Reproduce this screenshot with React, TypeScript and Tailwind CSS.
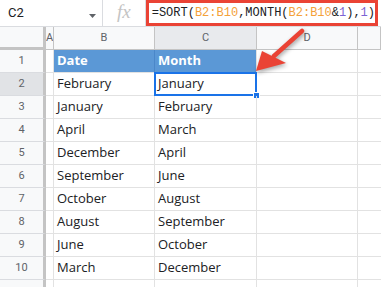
import { Fragment } from "react";

const rows: [string, string][] = [
  ["February", "January"],
  ["January", "February"],
  ["April", "March"],
  ["December", "April"],
  ["September", "June"],
  ["October", "August"],
  ["August", "September"],
  ["June", "October"],
  ["March", "December"],
];

const cols = ["A", "B", "C", "D", ""];

function FormulaBar() {
  return (
    <div className="flex h-[27px] items-stretch border-b border-[#dadce0] bg-white">
      <div className="relative flex w-[103px] items-center border-r border-[#dadce0] pl-[8px] text-[13px] text-[#202124] [font-family:Roboto,sans-serif]">
        C2
        <svg className="absolute left-[89px] top-[14px]" width="7" height="4" viewBox="0 0 7 4">
          <path d="M0 0h7L3.5 4z" fill="#5f6368" />
        </svg>
      </div>
      <div className="flex w-[43px] items-center justify-center border-r border-[#dadce0] pb-[2px] text-[19px] italic text-[#c4c4c4] [font-family:'Liberation_Serif',serif]">
        fx
      </div>
      <div className="mr-[3px] flex flex-1 items-center border-[3px] border-[#ea4335] pl-[3px] text-[12px] text-[#202124] [font-family:'Liberation_Mono',monospace]">
        <span>=SORT(</span>
        <span className="text-[#f4a13a]">B2:B10</span>
        <span>,MONTH(</span>
        <span className="text-[#f4a13a]">B2:B10</span>
        <span>&amp;</span>
        <span className="text-[#7c63d3]">1</span>
        <span>),</span>
        <span className="text-[#7c63d3]">1</span>
        <span>)</span>
      </div>
    </div>
  );
}

function Arrow() {
  return (
    <svg
      className="pointer-events-none absolute left-0 top-0 [filter:drop-shadow(1px_2px_2px_rgba(0,0,0,0.35))]"
      width="381"
      height="287"
      viewBox="0 0 381 287"
    >
      <line x1="302" y1="31" x2="274" y2="56" stroke="#ea4335" strokeWidth="4.5" strokeLinecap="round" />
      <polygon points="256,71 262,51 286,63" fill="#ea4335" />
    </svg>
  );
}

export default function App() {
  return (
    <div className="relative h-[287px] w-[381px] overflow-hidden bg-white [font-family:'Open_Sans',sans-serif]">
      <FormulaBar />
      <div className="grid grid-cols-[46px_8px_101px_102px_101px_1fr] auto-rows-[23px]">
        {/* header row */}
        <div className="border-b-[3px] border-r-[3px] border-[#c4c4c4] bg-[#f8f9fa]" />
        {cols.map((c) => (
          <div
            key={c || "e"}
            className={
              "flex items-center justify-center overflow-hidden border-b border-r border-[#c4c4c4] text-[11px] text-[#5f6368] [font-family:Roboto,sans-serif] " +
              (c === "C" ? "bg-[#e8eaed]" : "bg-[#f8f9fa]")
            }
          >
            {c}
          </div>
        ))}

        {/* row 1 */}
        <div className="flex items-center justify-center border-b border-r-[3px] border-b-[#dadce0] border-r-[#c4c4c4] bg-[#f8f9fa] text-[11px] text-[#5f6368] [font-family:Roboto,sans-serif]">
          1
        </div>
        <div className="border-b border-r border-[#e2e2e2]" />
        <div className="flex items-center border-b border-r border-b-[#e2e2e2] border-r-[#4a87c9] bg-[#5b98d6] pl-[3px] text-[13px] font-bold text-white">
          Date
        </div>
        <div className="flex items-center border-b border-r border-[#e2e2e2] bg-[#5b98d6] pl-[3px] text-[13px] font-bold text-white">
          Month
        </div>
        <div className="border-b border-r border-[#e2e2e2]" />
        <div className="border-b border-[#e2e2e2]" />

        {rows.map(([b, c], i) => {
          const n = i + 2;
          const sel = n === 2;
          return (
            <Fragment key={n}>
              <div
                className={
                  "flex items-center justify-center border-b border-r-[3px] border-b-[#dadce0] border-r-[#c4c4c4] text-[11px] text-[#5f6368] [font-family:Roboto,sans-serif] " +
                  (sel ? "bg-[#e1e3e6]" : "bg-[#f8f9fa]")
                }
              >
                {n}
              </div>
              <div className="border-b border-r border-[#e2e2e2]" />
              <div className="flex items-center border-b border-r border-[#e2e2e2] pl-[3px] text-[13px] text-[#202124]">
                {b}
              </div>
              <div className="relative flex items-center border-b border-r border-[#e2e2e2] pl-[3px] text-[13px] text-[#202124]">
                {c}
                {sel && (
                  <>
                    <div className="absolute -left-px -top-px bottom-[-1px] right-[-1px] border-2 border-[#1a73e8]" />
                    <div className="absolute bottom-[-4px] right-[-4px] h-[7px] w-[7px] border border-white bg-[#1a73e8]" />
                  </>
                )}
              </div>
              <div className="border-b border-r border-[#e2e2e2]" />
              <div className="border-b border-[#e2e2e2]" />
            </Fragment>
          );
        })}

        {/* row 11 (partial) */}
        <div className="flex items-start justify-center border-r-[3px] border-[#c4c4c4] bg-[#f8f9fa] pt-[4px] text-[11px] text-[#5f6368] [font-family:Roboto,sans-serif]">
          11
        </div>
        <div className="border-r border-[#e2e2e2]" />
        <div className="border-r border-[#e2e2e2]" />
        <div className="border-r border-[#e2e2e2]" />
        <div className="border-r border-[#e2e2e2]" />
        <div />
      </div>
      <Arrow />
    </div>
  );
}
